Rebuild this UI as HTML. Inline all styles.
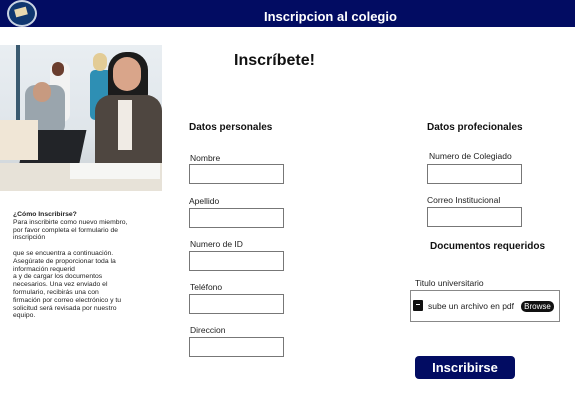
<!DOCTYPE html>
<html><head><meta charset="utf-8"><style>
*{margin:0;padding:0;box-sizing:border-box}
body{width:575px;height:401px;background:#fff;font-family:"Liberation Sans",sans-serif;position:relative;overflow:hidden;color:#111}
.a{position:absolute;white-space:nowrap}
.hdr{left:0;top:0;width:575px;height:27px;background:#020c62}
.lbl{font-size:8.5px;color:#222}
.h{font-size:10px;font-weight:bold}
.in{width:95px;height:20px;border:1px solid #777;background:#fff}
.side{font-size:6.8px;line-height:7.8px;color:#222}
</style></head><body>
<div class="a hdr"></div>
<div class="a" style="left:7px;top:0;width:30px;height:27px;border-radius:50%;background:#0f3670;border:2px solid #c9d3e3"></div>
<div class="a" style="left:15px;top:8px;width:12px;height:8px;background:#e8d8b0;transform:rotate(-15deg)"></div>
<div class="a" style="left:264px;top:9px;font-size:13px;font-weight:bold;color:#fff">Inscripcion al colegio</div>

<div class="a" style="left:0;top:45px;width:162px;height:146px;background:linear-gradient(180deg,#e9eef2 0%,#dfe5ea 60%,#c9ced2 100%);overflow:hidden">
 <div class="a" style="left:16px;top:0;width:4px;height:80px;background:#3a5a70"></div>
 <div class="a" style="left:50px;top:17px;width:20px;height:60px;background:#f2f2f2;border-radius:8px"></div>
 <div class="a" style="left:52px;top:17px;width:12px;height:14px;background:#6b3e2e;border-radius:6px"></div>
 <div class="a" style="left:90px;top:25px;width:22px;height:50px;background:#2e8fb4;border-radius:5px"></div>
 <div class="a" style="left:93px;top:8px;width:14px;height:18px;background:#e3cc96;border-radius:7px"></div>
 <div class="a" style="left:25px;top:40px;width:40px;height:50px;background:#9aa5ad;border-radius:10px"></div>
 <div class="a" style="left:33px;top:37px;width:18px;height:20px;background:#c79a80;border-radius:9px"></div>
 <div class="a" style="left:108px;top:7px;width:40px;height:60px;background:#1c1c1c;border-radius:18px"></div>
 <div class="a" style="left:113px;top:12px;width:28px;height:34px;background:#d9a58a;border-radius:14px"></div>
 <div class="a" style="left:95px;top:50px;width:67px;height:90px;background:#4e4640;border-radius:16px 16px 0 0"></div>
 <div class="a" style="left:118px;top:55px;width:14px;height:50px;background:#f0ebe5"></div>
 <div class="a" style="left:22px;top:85px;width:60px;height:42px;background:#222428;transform:skewX(-12deg)"></div>
 <div class="a" style="left:0;top:118px;width:162px;height:28px;background:#e7e2d8"></div>
 <div class="a" style="left:70px;top:118px;width:90px;height:16px;background:#f6f6f4"></div>
 <div class="a" style="left:0;top:75px;width:38px;height:40px;background:#f0e6d6"></div>
</div>

<div class="a side" style="left:13px;top:211px"><b>¿Cómo Inscribirse?</b><br>Para inscribirte como nuevo miembro,<br>por favor completa el formulario de<br>inscripción<br><br>que se encuentra a continuación.<br>Asegúrate de proporcionar toda la<br>información requerid<br>a y de cargar los documentos<br>necesarios. Una vez enviado el<br>formulario, recibirás una con<br>firmación por correo electrónico y tu<br>solicitud será revisada por nuestro<br>equipo.</div>

<div class="a" style="left:234px;top:52px;font-size:16px;font-weight:bold">Inscríbete!</div>

<div class="a h" style="left:189px;top:122px">Datos personales</div>
<div class="a lbl" style="left:190px;top:153px">Nombre</div><div class="a in" style="left:189px;top:164px"></div>
<div class="a lbl" style="left:189px;top:196px">Apellido</div><div class="a in" style="left:189px;top:208px"></div>
<div class="a lbl" style="left:190px;top:239px">Numero de ID</div><div class="a in" style="left:189px;top:251px"></div>
<div class="a lbl" style="left:190px;top:282px">Teléfono</div><div class="a in" style="left:189px;top:294px"></div>
<div class="a lbl" style="left:190px;top:325px">Direccion</div><div class="a in" style="left:189px;top:337px"></div>

<div class="a h" style="left:427px;top:122px">Datos profecionales</div>
<div class="a lbl" style="left:429px;top:151px">Numero de Colegiado</div><div class="a in" style="left:427px;top:164px"></div>
<div class="a lbl" style="left:427px;top:195px">Correo Institucional</div><div class="a in" style="left:427px;top:207px"></div>
<div class="a h" style="left:430px;top:241px">Documentos requeridos</div>

<div class="a lbl" style="left:415px;top:278px">Titulo universitario</div>
<div class="a" style="left:410px;top:290px;width:150px;height:32px;border:1px solid #888"></div>
<div class="a" style="left:413px;top:300px;width:10px;height:11px;background:#111;border-radius:1px"></div>
<div class="a" style="left:416px;top:304px;width:4px;height:1px;background:#fff"></div>
<div class="a lbl" style="left:428px;top:301px">sube un archivo en pdf</div>
<div class="a" style="left:521px;top:301px;width:33px;height:11px;background:#111;border-radius:5px;color:#fff;font-size:8px;text-align:center;line-height:11px">Browse</div>

<div class="a" style="left:415px;top:356px;width:100px;height:23px;background:#020c62;border-radius:4px;color:#fff;font-size:13px;font-weight:bold;text-align:center;line-height:23px">Inscribirse</div>
</body></html>
